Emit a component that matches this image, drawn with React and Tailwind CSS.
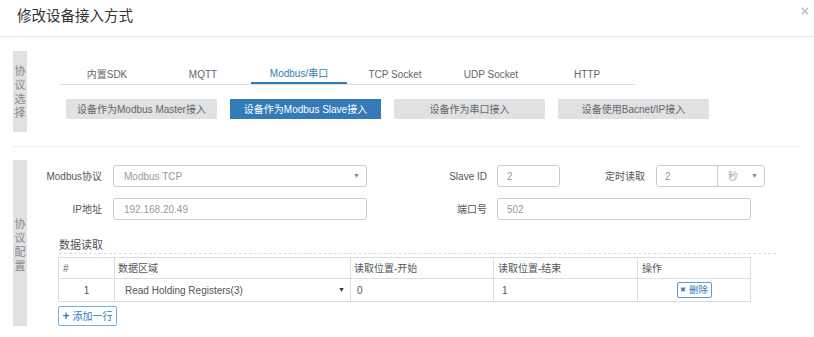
import React from 'react';

const tabs = ['内置SDK', 'MQTT', 'Modbus/串口', 'TCP Socket', 'UDP Socket', 'HTTP'];
const modes = ['设备作为Modbus Master接入', '设备作为Modbus Slave接入', '设备作为串口接入', '设备使用Bacnet/IP接入'];

const SideLabel = ({ text, className }) => (
    <div className={`w-[14px] shrink-0 bg-[#dfe1e3] flex flex-col items-center justify-center text-[11px] leading-[14px] text-[#888] ${className}`}>
        {text.split('').map((c, i) => (
            <span key={i}>{c}</span>
        ))}
    </div>
);

const Caret = () => <span className="text-[7px] text-[#888]">▼</span>;

const App = () => {
    return (
        <div
            className="w-[814px] h-[337px] bg-white overflow-hidden relative text-[10px] text-[#555]"
            style={{ fontFamily: '"Liberation Sans", "Noto Sans CJK SC", sans-serif' }}
        >
            {/* Header */}
            <div className="h-[37px] border-b border-[#e9e9e9] flex items-center justify-between pl-[17px] pr-[5px]">
                <h2 className="text-[14.5px] text-[#333] -mt-[2px]">修改设备接入方式</h2>
                <span className="text-[14px] font-bold text-[#c4c4c4] -mt-[13px]">×</span>
            </div>

            {/* Body */}
            <div className="h-[289px] overflow-hidden relative ml-[13px] mr-[12px]">
                {/* scrollbar thumb */}
                <div className="absolute right-[-6px] top-[14px] w-[6px] h-[272px] bg-[#dcdfe2]" />

                {/* Section 1 */}
                <div className="flex mt-[14px]">
                    <SideLabel text="协议选择" className="h-[81px]" />
                    <div className="pl-[32px] pt-[13px]">
                        <div className="flex border-b border-[#dcdfe2] w-[576px]">
                            {tabs.map((t, i) => (
                                <div
                                    key={t}
                                    className={`w-[96px] h-[20px] flex items-center justify-center ${
                                        i === 2 ? 'text-[#337ab7] border-b-2 border-[#337ab7] -mb-px' : 'text-[#666]'
                                    }`}
                                >
                                    {t}
                                </div>
                            ))}
                        </div>
                        <div className="flex gap-[13px] ml-[7px] mt-[14px]">
                            {modes.map((m, i) => (
                                <div
                                    key={m}
                                    className={`w-[151px] h-[20px] flex items-center justify-center ${
                                        i === 1 ? 'bg-[#337ab7] text-white' : 'bg-[#dfe1e3] text-[#666]'
                                    }`}
                                >
                                    {m}
                                </div>
                            ))}
                        </div>
                    </div>
                </div>

                <div className="border-t border-[#efefef] mt-[14px]" />

                {/* Section 2 */}
                <div className="flex mt-[13px]">
                    <SideLabel text="协议配置" className="h-[170px]" />
                    <div className="flex-1 pt-[5px]">
                        {/* row 1 */}
                        <div className="flex items-center h-[22px]">
                            <label className="w-[75px] text-right">Modbus协议</label>
                            <div className="ml-[11px] w-[254px] h-[22px] border border-[#ccc] rounded-[3px] flex items-center justify-between pl-[10px] pr-[6px] text-[#999]">
                                <span>Modbus TCP</span>
                                <Caret />
                            </div>
                            <label className="w-[120px] text-right">Slave ID</label>
                            <div className="ml-[10px] w-[63px] h-[22px] border border-[#ccc] rounded-[3px] flex items-center pl-[9px] text-[#999]">
                                2
                            </div>
                            <label className="w-[85px] text-right">定时读取</label>
                            <div className="ml-[11px] w-[109px] h-[22px] border border-[#ccc] rounded-[3px] flex text-[#999]">
                                <div className="w-[61px] flex items-center pl-[8px] border-r border-[#ccc]">2</div>
                                <div className="flex-1 flex items-center justify-between pl-[10px] pr-[6px]">
                                    <span className="text-[#aaa]">秒</span>
                                    <Caret />
                                </div>
                            </div>
                        </div>

                        {/* row 2 */}
                        <div className="flex items-center h-[22px] mt-[11px]">
                            <label className="w-[75px] text-right">IP地址</label>
                            <div className="ml-[11px] w-[254px] h-[22px] border border-[#ccc] rounded-[3px] flex items-center pl-[10px] text-[#999]">
                                192.168.20.49
                            </div>
                            <label className="w-[120px] text-right">端口号</label>
                            <div className="ml-[10px] w-[254px] h-[22px] border border-[#ccc] rounded-[3px] flex items-center pl-[9px] text-[#999]">
                                502
                            </div>
                        </div>

                        {/* data read */}
                        <div className="ml-[32px] mt-[17px] w-[717px]">
                            <div className="h-[17px] border-b border-dashed border-[#ddd] text-[11px] text-[#555]">数据读取</div>
                            <table className="mt-[3px] -ml-px border-collapse w-[693px] text-[#555]">
                                <thead>
                                    <tr className="h-[21px]">
                                        <th className="w-[56px] border border-[#ddd] text-left font-normal pl-[4px] text-[#666]">#</th>
                                        <th className="w-[236px] border border-[#ddd] text-left font-normal pl-[3px]">数据区域</th>
                                        <th className="w-[143px] border border-[#ddd] text-left font-normal pl-[3px]">读取位置-开始</th>
                                        <th className="w-[144px] border border-[#ddd] text-left font-normal pl-[4px]">读取位置-结束</th>
                                        <th className="border border-[#ddd] text-left font-normal pl-[4px]">操作</th>
                                    </tr>
                                </thead>
                                <tbody>
                                    <tr className="h-[23px]">
                                        <td className="border border-[#ddd] text-center">1</td>
                                        <td className="border border-[#ddd]">
                                            <div className="flex items-center justify-between pl-[10px] pr-[5px]">
                                                <span>Read Holding Registers(3)</span>
                                                <span className="text-[7px] text-[#333]">▼</span>
                                            </div>
                                        </td>
                                        <td className="border border-[#ddd] pl-[6px]">0</td>
                                        <td className="border border-[#ddd] pl-[8px]">1</td>
                                        <td className="border border-[#ddd]">
                                            <div className="flex justify-center">
                                                <button className="h-[16px] w-[35px] border border-[#5b9bd5] rounded-[2px] text-[#337ab7] text-[9.5px] flex items-center justify-center gap-[3px]">
                                                    <span className="text-[7px]">✖</span>删除
                                                </button>
                                            </div>
                                        </td>
                                    </tr>
                                </tbody>
                            </table>
                            <button className="mt-[4px] -ml-px h-[20px] w-[59px] border border-[#6fb0e0] rounded-[2px] text-[#337ab7] flex items-center justify-center gap-[3px]">
                                <span className="font-bold text-[12px] leading-none">+</span>添加一行
                            </button>
                        </div>
                    </div>
                </div>
            </div>
        </div>
    );
};

export default App;
